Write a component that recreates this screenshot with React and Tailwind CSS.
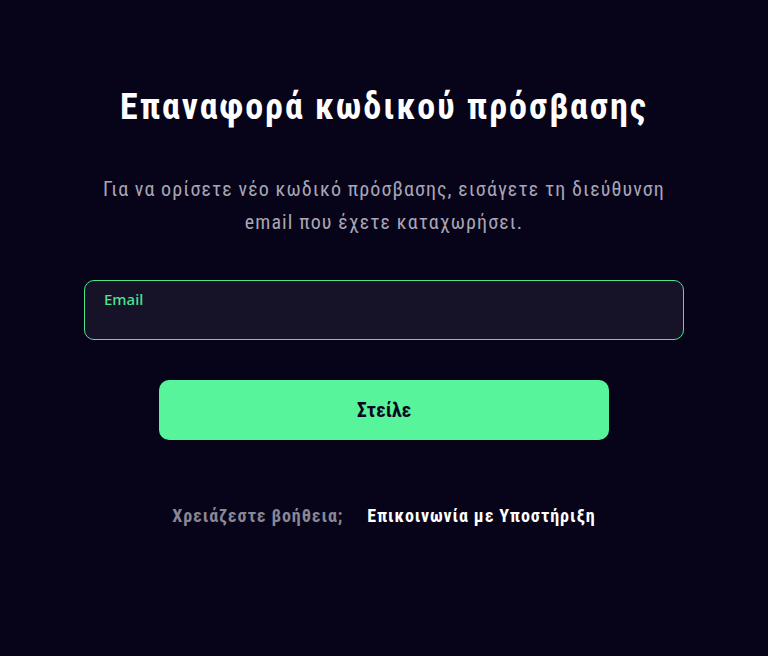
export default function App() {
  return (
    <div className="min-h-[656px] w-full bg-[#07041a] flex flex-col items-center pt-[84px] font-['Roboto',sans-serif] font-stretch-condensed">
      <h1 className="text-[36px] leading-[46px] font-bold text-white tracking-[0.055em]">
        Επαναφορά κωδικού πρόσβασης
      </h1>
      <p className="mt-[43px] text-[20px] leading-[33px] text-[#a9a6b5] text-center w-[580px] tracking-[0.055em]">
        Για να ορίσετε νέο κωδικό πρόσβασης, εισάγετε τη διεύθυνση email που έχετε καταχωρήσει.
      </p>
      <div className="mt-[41px] w-[600px] h-[60px] rounded-[10px] border border-[#4fe28f] bg-[#161228] px-[19px] pt-[8px]">
        <span className="block text-[15px] leading-[20px] font-medium text-[#4fe28f] font-['Noto_Sans',sans-serif] font-stretch-normal">
          Email
        </span>
      </div>
      <button className="mt-[40px] w-[450px] h-[60px] rounded-[10px] bg-[#58f49c] text-[20px] font-bold text-[#0b0820]">
        Στείλε
      </button>
      <div className="mt-[62px] flex items-center gap-[24px] text-[18px] font-bold tracking-[0.05em]">
        <span className="text-[#8a8795]">Χρειάζεστε βοήθεια;</span>
        <span className="text-white">Επικοινωνία με Υποστήριξη</span>
      </div>
    </div>
  );
}
